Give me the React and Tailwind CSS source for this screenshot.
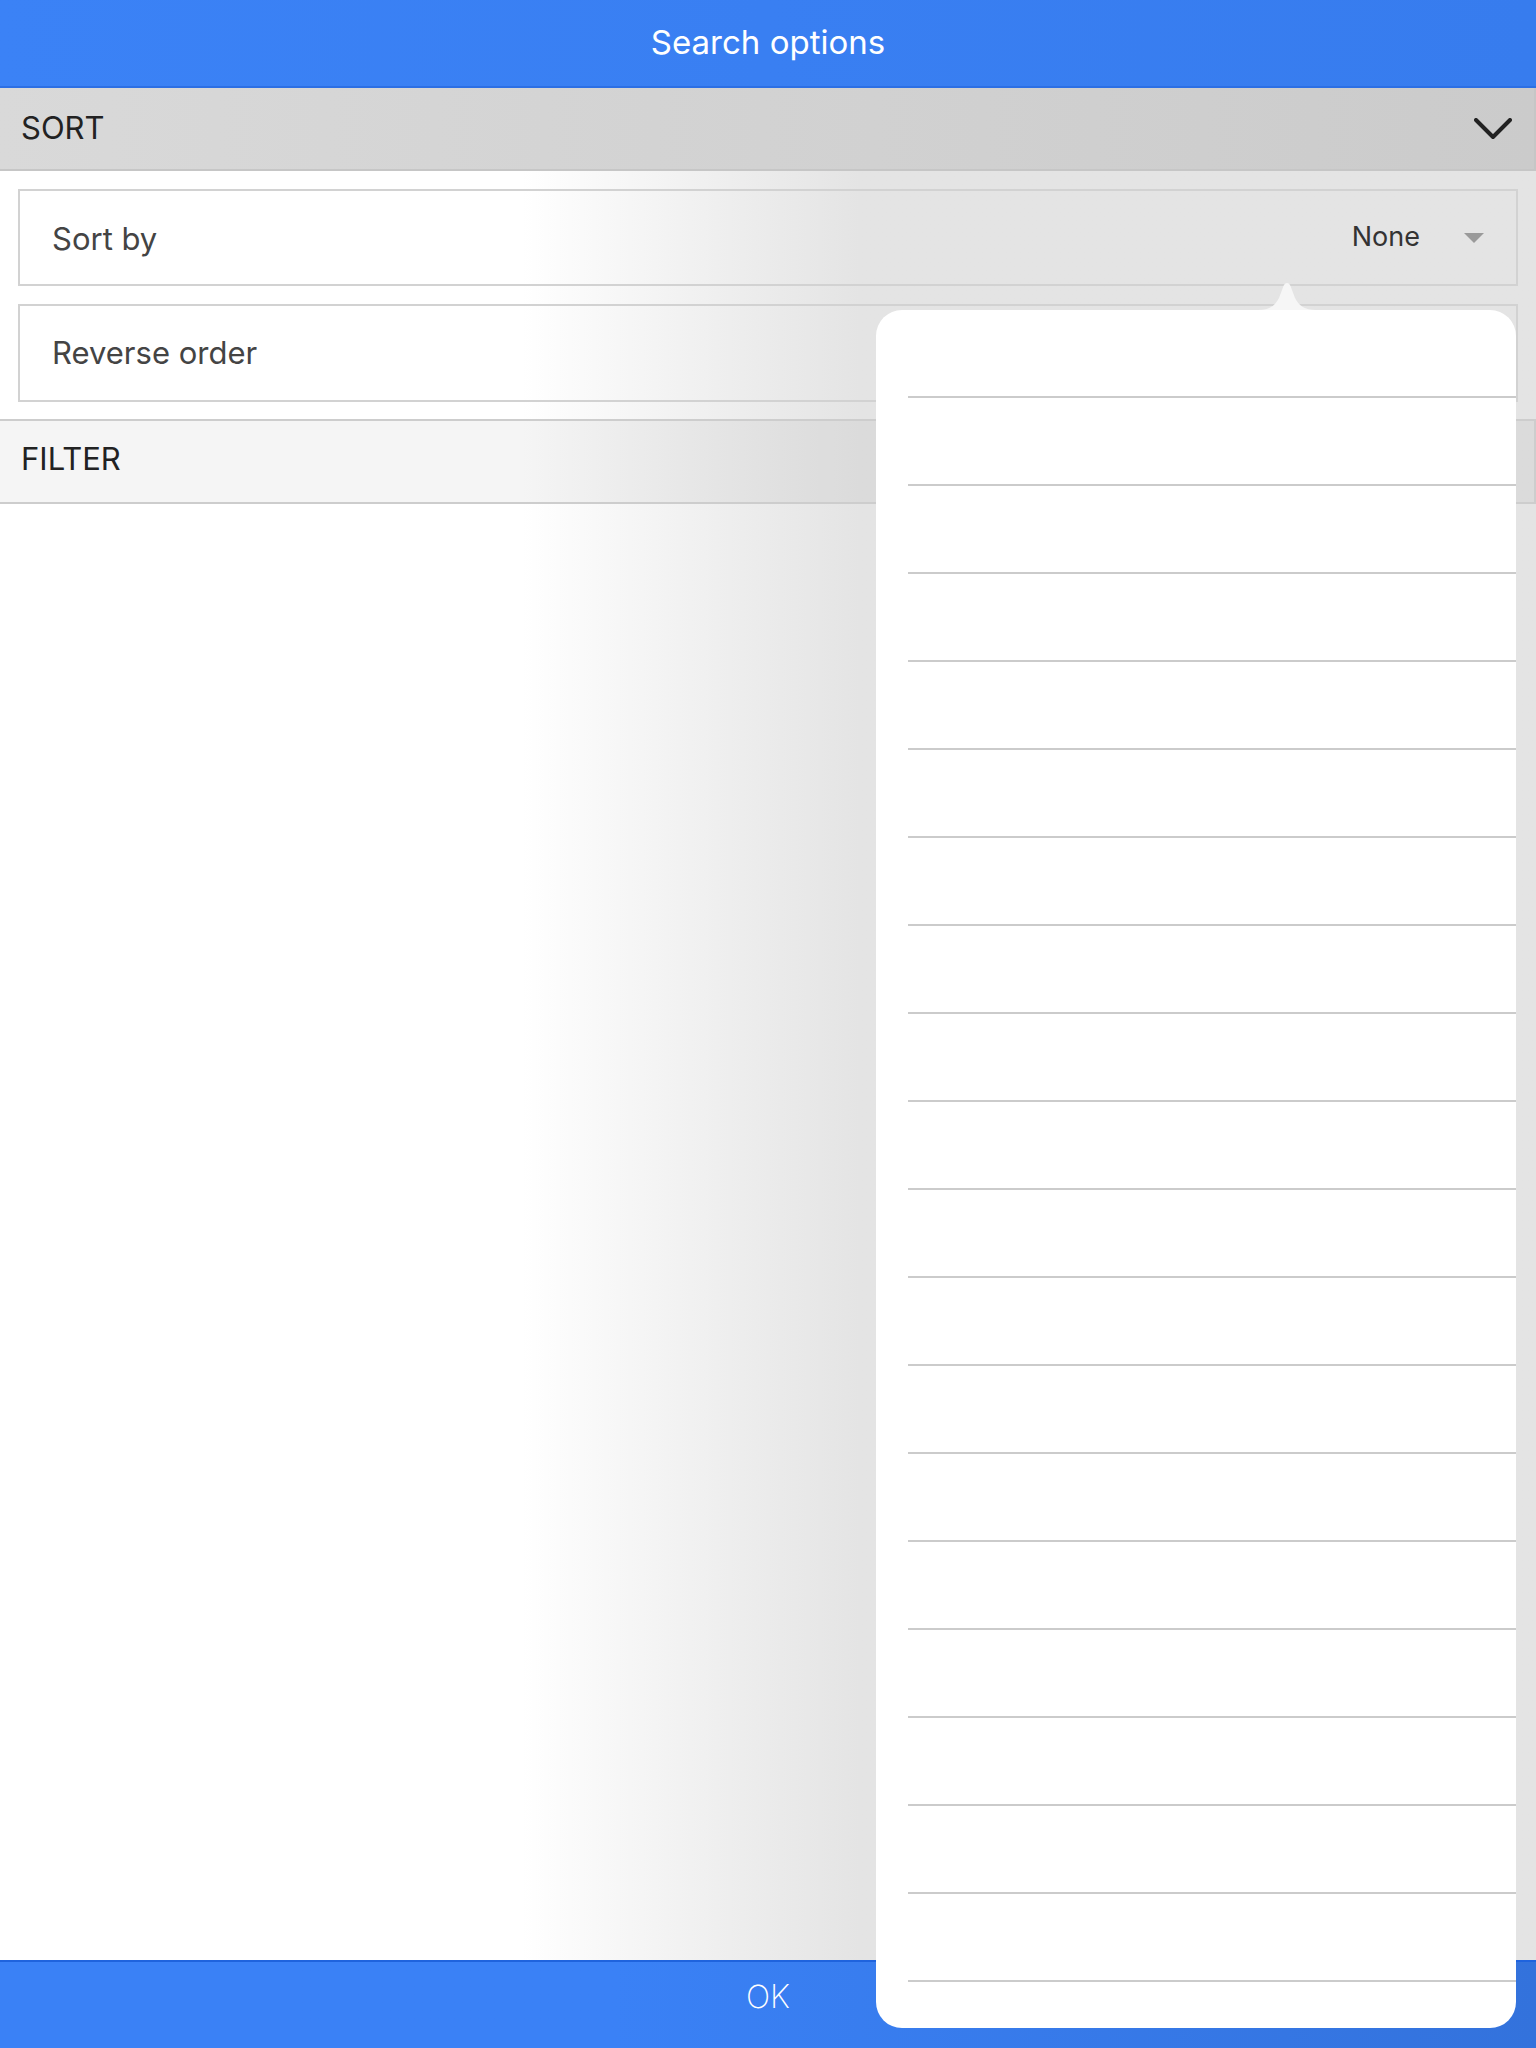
import React from 'react'

const rows = Array.from({ length: 19 }, (_, i) => i)

const Chevron = () => (
  <svg width="38" height="22" viewBox="0 0 38 22" fill="none">
    <path d="M2 2 L19 19 L36 2" stroke="#222" strokeWidth="4" strokeLinecap="round" strokeLinejoin="round" />
  </svg>
)

const Popover = () => (
  <div className="absolute left-[876px] top-[282px] w-[640px]">
    <div className="ml-[382px] h-[28px] w-[58px]">
      <svg width="58" height="28" viewBox="0 0 58 28">
        <path d="M0 28 C11 28 17 24 21 16 L25.5 4 C27 0 31 0 32.5 4 L37 16 C41 24 47 28 58 28 Z" fill="#f6f6f6" />
      </svg>
    </div>
    <div className="h-[1718px] overflow-hidden rounded-[26px] bg-white">
      {rows.map((i) => (
        <div key={i} className="h-[88px] pl-[32px]">
          <div className="h-full border-b-2 border-[#cbcbcb]" />
        </div>
      ))}
    </div>
  </div>
)

export default function App() {
  return (
    <div className="relative flex h-[2048px] w-[1536px] flex-col overflow-hidden font-['Inter','Liberation_Sans',sans-serif]">
      <header className="flex h-[88px] shrink-0 items-center justify-center border-b-2 border-[#2c6fe4] bg-linear-to-r from-[#3b82f6] to-[#377cee]">
        <h1 className="text-[33px] text-white">Search options</h1>
      </header>

      <div className="flex flex-1 flex-col bg-linear-to-r from-white from-[34%] via-[#f1f1f1] via-[45%] to-[#e4e4e4] to-[56%]">
        <div className="flex h-[83px] shrink-0 items-center justify-between border-r-2 border-b-2 border-[#c6c6c6] bg-linear-to-r from-[#d9d9d9] to-[#cbcbcb] pl-[21px] pr-[22px]">
          <span className="text-[31px] text-[#222]">SORT</span>
          <Chevron />
        </div>

        <div className="flex flex-col gap-[18px] px-[18px] pt-[18px]">
          <div className="flex h-[97px] items-center justify-between border-2 border-[#d2d2d2] pl-[32px] pr-[32px]">
            <span className="pt-[3px] text-[31px] text-[#444]">Sort by</span>
            <div className="flex items-center gap-[44px]">
              <span className="text-[27px] text-[#333]">None</span>
              <svg width="20" height="10" viewBox="0 0 20 10">
                <path d="M0 0 L20 0 L10 10 Z" fill="#9a9a9a" />
              </svg>
            </div>
          </div>
          <div className="flex h-[98px] items-center border-2 border-[#d2d2d2] pl-[32px]">
            <span className="text-[31px] text-[#444]">Reverse order</span>
          </div>
        </div>

        <div className="mt-[17px] flex h-[85px] shrink-0 items-center border-y-2 border-r-2 border-[#cdcdcd] bg-black/[0.04] pb-[5px] pl-[21px]">
          <span className="text-[31px] text-[#222]">FILTER</span>
        </div>

        <div className="flex-1" />
      </div>

      <footer className="flex h-[88px] shrink-0 items-center justify-center border-t-2 border-[#1f63dd] bg-linear-to-r from-[#3a81f6] from-[40%] to-[#3372dc] pb-[16px]">
        <span className="text-[32px] font-extralight text-white">OK</span>
      </footer>

      <Popover />
    </div>
  )
}
